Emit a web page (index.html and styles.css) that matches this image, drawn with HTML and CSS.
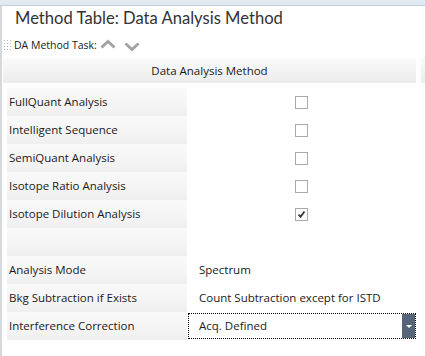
FILE: index.html
```html
<!DOCTYPE html>
<html>
<head>
<meta charset="utf-8">
<link rel="stylesheet" href="styles.css">
</head>
<body>
<div class="topbar"></div>
<div class="panel">
  <div class="title">Method Table: Data Analysis Method</div>
  <div class="taskbar">
    <span class="grip"></span>
    <span class="task-label">DA Method Task:</span>
    <svg class="chev" width="16" height="10" viewBox="0 0 16 10"><path d="M1.5 8.5 L8 2.5 L14.5 8.5" fill="none" stroke="#a3a3a3" stroke-width="3"/></svg>
    <svg class="chev down" width="16" height="10" viewBox="0 0 16 10"><path d="M1.5 1.5 L8 7.5 L14.5 1.5" fill="none" stroke="#a3a3a3" stroke-width="3"/></svg>
  </div>
  <div class="headrow">
    <div class="colhead">Data Analysis Method</div>
    <div class="colhead2"></div>
  </div>
  <div class="grid">
    <div class="lbl">FullQuant Analysis</div><div class="val center"><span class="cb"></span></div>
    <div class="lbl">Intelligent Sequence</div><div class="val center"><span class="cb"></span></div>
    <div class="lbl">SemiQuant Analysis</div><div class="val center"><span class="cb"></span></div>
    <div class="lbl">Isotope Ratio Analysis</div><div class="val center"><span class="cb"></span></div>
    <div class="lbl">Isotope Dilution Analysis</div><div class="val center"><span class="cb checked"><svg width="9" height="9" viewBox="0 0 9 9"><path d="M1.5 4.5 L3.5 6.8 L7.5 1.5" fill="none" stroke="#333" stroke-width="1.8"/></svg></span></div>
    <div class="lbl"></div><div class="val"></div>
    <div class="lbl">Analysis Mode</div><div class="val">Spectrum</div>
    <div class="lbl">Bkg Subtraction if Exists</div><div class="val">Count Subtraction except for ISTD</div>
    <div class="lbl">Interference Correction</div>
    <div class="val combo-cell">
      <div class="combo"><span class="combo-text">Acq. Defined</span><span class="combo-btn"><span class="arrow"></span></span></div>
    </div>
  </div>
</div>
</body>
</html>
```

FILE: styles.css
```css
html, body {
  margin: 0;
  padding: 0;
  background: #ffffff;
}
body {
  width: 425px;
  height: 356px;
  overflow: hidden;
  font-family: "Open Sans", "Noto Sans", sans-serif;
  color: #1a1a1a;
}
.topbar {
  height: 5px;
  background: #e1eaf3;
  border-bottom: 1px solid #c6cdd4;
}
.panel {
  border-left: 2px solid #d3d9df;
  height: 350px;
  box-sizing: border-box;
}
.title {
  font-family: "Lato", "Open Sans", sans-serif;
  font-size: 16.6px;
  color: #333333;
  padding-left: 13px;
  height: 28px;
  line-height: 25px;
}
.taskbar {
  display: flex;
  align-items: center;
  height: 22px;
  padding-left: 1px;
}
.grip {
  width: 9px;
  height: 13px;
  background-image: radial-gradient(circle, #b5b5b5 0.8px, transparent 1px);
  background-size: 3px 3px;
  margin-right: 2px;
}
.task-label {
  font-size: 10.5px;
  color: #1a1a1a;
  margin-right: 3px;
}
.chev { margin-right: 8px; margin-top: -2px; }
.chev.down { margin-top: 3px; }
.headrow {
  display: flex;
  margin-top: 2px;
  height: 25px;
}
.colhead {
  margin-left: 1px;
  width: 413px;
  background: linear-gradient(to bottom, #fafafa, #ececec);
  font-size: 11.5px;
  line-height: 25px;
  text-align: center;
}
.colhead2 {
  margin-left: 5px;
  width: 4px;
  background: linear-gradient(to bottom, #fafafa, #ececec);
}
.grid {
  display: grid;
  grid-template-columns: 180px 229px;
  grid-auto-rows: 28px;
  margin-top: 5px;
  margin-left: 5px;
  font-size: 11.5px;
}
.lbl {
  background: linear-gradient(to bottom, #f9f9f9 0%, #f5f5f5 50%, #efefef 100%);
  padding-left: 2px;
  line-height: 28px;
  white-space: nowrap;
}
.val {
  padding-left: 12px;
  line-height: 28px;
  white-space: nowrap;
}
.val.center {
  padding-left: 0;
  display: flex;
  align-items: center;
  justify-content: center;
}
.cb {
  width: 11px;
  height: 11px;
  border: 1px solid #a9a9a9;
  background: #ffffff;
  display: flex;
  align-items: center;
  justify-content: center;
}
.combo-cell {
  padding-left: 0;
  display: flex;
  align-items: center;
}
.combo {
  display: flex;
  width: 229px;
  height: 26px;
  box-sizing: border-box;
  border: 1px dotted #000000;
  margin-left: 1px;
}
.combo-text {
  flex: 1;
  padding-left: 10px;
  line-height: 24px;
}
.combo-btn {
  width: 13px;
  background: #56657a;
  display: flex;
  align-items: center;
  justify-content: center;
}
.arrow {
  width: 0;
  height: 0;
  border-left: 3px solid transparent;
  border-right: 3px solid transparent;
  border-top: 3px solid #ffffff;
}
```
